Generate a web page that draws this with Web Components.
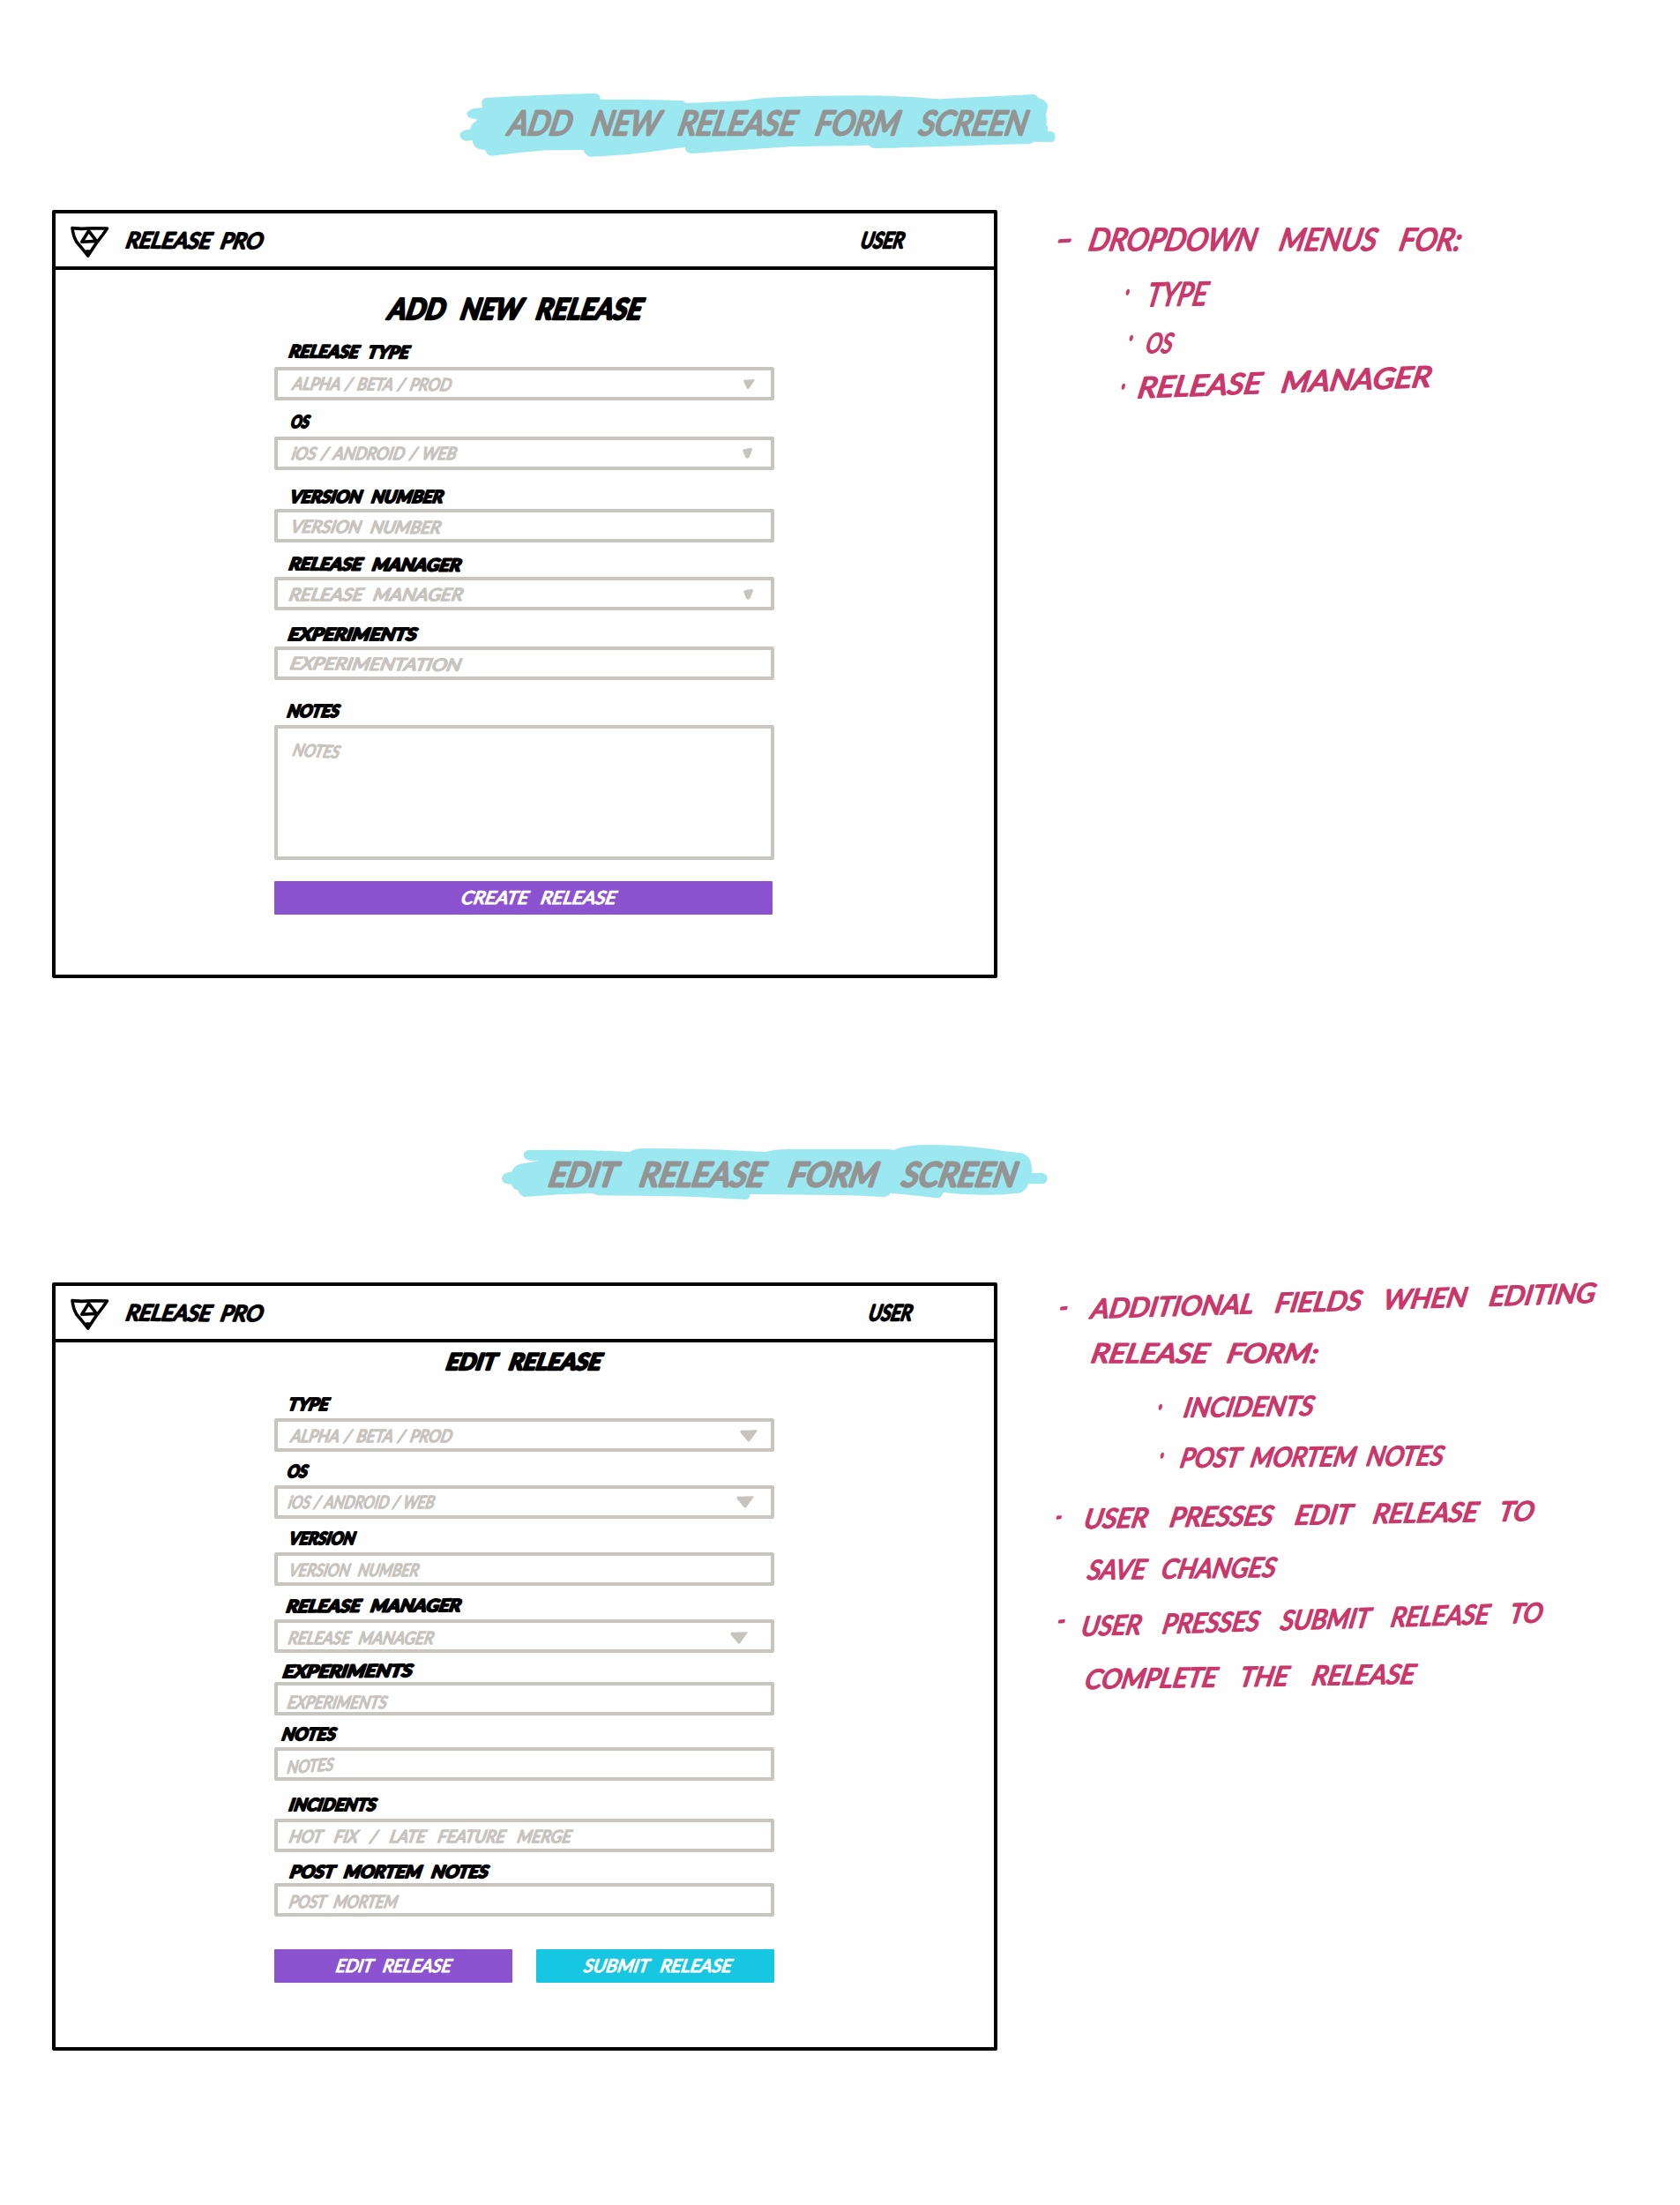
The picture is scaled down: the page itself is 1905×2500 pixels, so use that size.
<!DOCTYPE html>
<html lang="en">
<head>
<meta charset="utf-8">
<title>Release Pro – form screens</title>
<style>
  body { margin: 0; background: #fefefe; font-family: Lato, "Liberation Sans", sans-serif; }
</style>
</head>
<body>
<release-board></release-board>
<script>
const num = (el, name, fallback) => el.hasAttribute(name) ? parseFloat(el.getAttribute(name)) : fallback;

/* One marker-written run. x: left offset, w: ink width, cap: letter height, pen: extra stroke. */
class InkText extends HTMLElement {
  connectedCallback() {
    const text = this.getAttribute('text');
    const w = num(this, 'w', 100), cap = num(this, 'cap', 15), pen = num(this, 'pen', 1);
    const weight = num(this, 'weight', 400), tilt = num(this, 'tilt', 0), rise = num(this, 'rise', 0);
    const gap = num(this, 'gap', 0.25), lean = cap * 0.21;
    const size = (cap - pen) / 0.72;
    const root = this.attachShadow({ mode: 'open' });
    root.innerHTML = `<style>
      :host { display: block; flex: none; width: ${w}px; height: ${cap}px; margin-left: ${num(this, 'x', 0)}px; }
      svg { display: block; overflow: visible; }
      text { font: italic ${weight} ${size}px Lato, "Liberation Sans", sans-serif; fill: currentColor;
        stroke: currentColor; stroke-width: ${pen}px; stroke-linejoin: round; word-spacing: ${gap}em; }
    </style>
    <svg width="${w}" height="${cap}"><text textLength="${Math.max(w - lean, 4)}" lengthAdjust="spacingAndGlyphs"
      transform="translate(0 ${cap - pen / 2 - rise}) rotate(${tilt}) skewX(-12)"></text></svg>`;
    root.querySelector('text').textContent = text;
  }
}

class MarkerTitle extends HTMLElement {
  connectedCallback() {
    const w = num(this, 'w'), h = num(this, 'h');
    this.attachShadow({ mode: 'open' }).innerHTML = `<style>
      :host { display: grid; width: ${w}px; height: ${h}px; margin-left: ${num(this, 'x')}px; color: #949494; }
      svg, div { grid-area: 1 / 1; }
      div { padding-top: ${num(this, 'top')}px; }
    </style>
    <svg width="${w}" height="${h}" viewBox="0 0 1568 ${h * 3}" preserveAspectRatio="none">
      <path fill="#9be8f0" d="${this.getAttribute('shape')}"/></svg>
    <div><slot></slot></div>`;
  }
}

class BrandLogo extends HTMLElement {
  connectedCallback() {
    this.attachShadow({ mode: 'open' }).innerHTML = `<style>:host { display: block; } svg { display: block; }</style>
    <svg width="44" height="37" viewBox="0 0 44 37" fill="none" stroke="#000" stroke-width="3.6" stroke-linecap="round" stroke-linejoin="round">
      <path d="M2 2.6L12 3.4L26 2.8L41.5 3L37 9.5L29 20L23 29L19.7 34L13 25.5L7 18.5Q3 12 2 2.6Z"/>
      <path d="M20.6 5.8L12.8 18.2L29.5 17.4Z"/><path d="M18 29L21 29L20 33Z"/>
    </svg>`;
  }
}

class AppFrame extends HTMLElement {
  connectedCallback() {
    this.attachShadow({ mode: 'open' }).innerHTML = `<style>
      :host { display: block; box-sizing: border-box; flex: none; width: 1072px; height: 871px; border: 4px solid #000; border-radius: 2px; color: #000; }
      header { display: flex; align-items: center; box-sizing: border-box; height: 64px; border-bottom: 4px solid #000; padding: 0 ${num(this, 'inset')}px 0 17px; }
      brand-logo { margin-top: 4px; }
      .user { margin-left: auto; }
    </style>
    <header><brand-logo></brand-logo><ink-text text="RELEASE PRO" x="18" w="159" cap="20" pen="2.2" gap="0.2" tilt="0.4"></ink-text>
    <div class="user"><ink-text text="USER" w="${num(this, 'user')}" cap="20" pen="2.4"></ink-text></div></header>
    <slot></slot>`;
  }
}

class ReleaseForm extends HTMLElement {
  connectedCallback() {
    this.attachShadow({ mode: 'open' }).innerHTML = `<style>
      :host { display: flex; flex-direction: column; width: 567px; margin-left: 248px; }
      .head { padding-top: ${num(this, 'top')}px; }
      .actions { display: flex; gap: 27px; margin-top: ${num(this, 'foot')}px; }
    </style>
    <div class="head"><slot name="title"></slot></div><slot></slot>
    <div class="actions"><slot name="action"></slot></div>`;
  }
}

class FormField extends HTMLElement {
  connectedCallback() {
    const a = n => this.getAttribute(n);
    const arrow = a('arrow');
    const [aw, ah, right] = arrow ? arrow.split(' ').map(Number) : [0, 0, 0];
    const pointer = aw > 15
      ? 'M1 .8Q0 2 .7 3.6L9 13.3Q10 14 11 13.2L19.5 1.5Q20 .3 19 .3L6 .8Q2 0 1 .8Z'
      : aw > 12 ? 'M.5 .8L12 0Q13 .5 12.4 1.6L6.3 10.5Q5 11.5 4 10.6L0 2Z'
      : 'M0 2.5Q2 .3 10 0Q11.5 1 10.5 3L7.6 10.5Q5 13 3 10Z';
    this.attachShadow({ mode: 'open' }).innerHTML = `<style>
      :host { display: block; }
      .label { display: flex; align-items: flex-end; box-sizing: border-box; height: ${a('space')}px; padding-bottom: ${a('drop')}px; }
      .box { display: flex; align-items: ${a('tall') ? 'flex-start' : 'center'}; justify-content: space-between; box-sizing: border-box;
        height: ${a('tall') || 38}px; border: 4px solid #c8c4bf; border-radius: 2px; color: #c7c3be; padding: ${a('tall') ? '16px' : (a('nudge') || 0) + 'px'} ${right}px 0 0; }
      svg { display: block; flex: none; }
    </style>
    <div class="label"><ink-text text="${a('label')}" x="${a('lx')}" w="${a('lw')}" cap="16" weight="700" pen="2" gap="0.32" tilt="${a('lt') || 0}"></ink-text></div>
    <div class="box"><ink-text text="${a('hint')}" x="${a('hx') - 4}" w="${a('hw')}" cap="15.5" pen="1.5" gap="${a('gap') || 0.3}" tilt="${a('ht') || 0}"></ink-text>
    ${arrow ? `<svg width="${aw}" height="${ah}" viewBox="0 0 ${aw > 15 ? 20 : aw > 12 ? 13 : 11} ${aw > 15 ? 14 : aw > 12 ? 11 : 12}" preserveAspectRatio="none"><path fill="currentColor" d="${pointer}"/></svg>` : ''}</div>`;
  }
}

class FormAction extends HTMLElement {
  connectedCallback() {
    this.attachShadow({ mode: 'open' }).innerHTML = `<style>
      :host { display: flex; align-items: center; box-sizing: border-box; height: 38px; width: ${num(this, 'w')}px;
        background: ${this.getAttribute('fill')}; color: #fff; border-radius: 1px; }
    </style><slot></slot>`;
  }
}

/* A note row; drop is the distance from the previous baseline. */
class NoteLine extends HTMLElement {
  connectedCallback() {
    const mark = this.getAttribute('mark');
    const [mx, mw, rise] = (this.getAttribute('at') || '0 0 0').split(' ').map(Number);
    const x = num(this, 'x'), dash = mark === '-';
    this.attachShadow({ mode: 'open' }).innerHTML = `<style>
      :host { display: flex; align-items: flex-end; height: ${num(this, 'drop')}px; color: #c9386b; }
    </style>
    ${mark ? `<ink-text text="${mark}" x="${mx}" w="${mw}" cap="24" pen="${dash ? 1.8 : 2.8}" rise="${rise}" tilt="${dash ? -4 : 0}"></ink-text>` : ''}
    <ink-text text="${this.getAttribute('text')}" x="${x - mx - mw}" w="${num(this, 'w')}" cap="${num(this, 'cap', 23.5)}" pen="1.7" gap="${num(this, 'gap', 0.38)}" tilt="${num(this, 'tilt', 0)}"></ink-text>`;
  }
}

class NoteList extends HTMLElement {
  connectedCallback() {
    this.attachShadow({ mode: 'open' }).innerHTML = `<style>:host { display: flex; flex-direction: column; margin-left: 59px; width: 660px; }</style><slot></slot>`;
  }
}

class ScreenRow extends HTMLElement {
  connectedCallback() {
    this.attachShadow({ mode: 'open' }).innerHTML = `<style>:host { display: flex; align-items: flex-start; padding-left: 59px; margin-top: ${num(this, 'top')}px; }</style><slot></slot>`;
  }
}

class ReleaseBoard extends HTMLElement {
  connectedCallback() {
    this.attachShadow({ mode: 'open' }).innerHTML = `<style>
      :host { display: block; box-sizing: border-box; width: 1905px; height: 2500px; padding-top: 80px; overflow: hidden; }
      .second { margin-top: 171px; }
    </style>
    <section>
      <marker-title x="500" w="720" h="120" top="44" shape="M110 93Q240 82 380 78Q395 80 393 98Q500 98 595 102Q604 106 604 111Q680 106 752 102Q800 86 1040 85Q1150 86 1230 97L1463 81Q1474 84 1474 92Q1496 100 1499 120L1494 150Q1497 170 1495 185Q1502 195 1497 206Q1516 205 1517 222Q1517 243 1508 243L1462 242Q1460 249 1450 249L1120 263L1072 264Q1060 262 1058 254L860 259Q740 270 620 282Q603 282 603 262L585 263Q470 288 370 293Q356 291 352 270L260 271Q190 279 125 290Q113 288 110 270Q80 270 78 238L60 239Q46 234 47 218Q49 201 72 200Q73 182 89 170L88 165Q64 164 64 146Q67 128 103 126Q96 100 110 93Z">
        <ink-text text="ADD NEW RELEASE FORM SCREEN" x="75" w="594" cap="30" pen="2.6" gap="0.42"></ink-text>
      </marker-title>
      <screen-row top="38">
        <app-frame inset="99" user="53">
          <release-form top="31" foot="24">
            <ink-text slot="title" text="ADD NEW RELEASE" x="128" w="293" cap="26" pen="2.4" weight="700" gap="0.35"></ink-text>
            <form-field space="53" drop="10" label="RELEASE TYPE" lx="16" lw="139" lt="0.6" hint="ALPHA / BETA / PROD" hx="20" hw="183" ht="0.4" gap="0.1" arrow="13 11 18"></form-field>
            <form-field space="41" drop="9" label="OS" lx="18" lw="24" hint="iOS / ANDROID / WEB" hx="19" hw="190" gap="0.1" arrow="11 12 21"></form-field>
            <form-field space="44" drop="6" label="VERSION NUMBER" lx="17" lw="177" hint="VERSION NUMBER" hx="18" hw="173" nudge="2" ht="0.4"></form-field>
            <form-field space="39" drop="7" label="RELEASE MANAGER" lx="16" lw="198" lt="0.5" hint="RELEASE MANAGER" hx="16" hw="200" nudge="1" arrow="11 12 20"></form-field>
            <form-field space="41" drop="6" label="EXPERIMENTS" lx="15" lw="149" hint="EXPERIMENTATION" hx="17" hw="197" nudge="0" ht="0.6"></form-field>
            <form-field space="51" drop="8" label="NOTES" lx="14" lw="62" hint="NOTES" hx="20" hw="56" tall="153" ht="3"></form-field>
            <form-action slot="action" w="565" fill="#8b53cf"><ink-text text="CREATE RELEASE" x="211" w="179" cap="16" pen="1.2" gap="0.4"></ink-text></form-action>
          </release-form>
        </app-frame>
        <note-list>
          <note-line drop="47" mark="-" at="7 23 1" x="43" w="428" cap="27" text="DROPDOWN MENUS FOR:" gap="0.55"></note-line>
          <note-line drop="63" mark="·" at="85 9 7" x="109" w="74" cap="28" text="TYPE" tilt="-1"></note-line>
          <note-line drop="53" mark="·" at="89 9 8" x="108" w="35" cap="24" text="OS"></note-line>
          <note-line drop="51" mark="·" at="80 9 4" x="99" w="338" cap="25" text="RELEASE MANAGER" tilt="-2.2"></note-line>
        </note-list>
      </screen-row>
    </section>
    <section class="second">
      <marker-title x="550" w="660" h="100" top="36" shape="M118 72Q260 70 390 78Q402 66 430 66Q600 66 755 78Q780 69 815 69L1085 69Q1100 71 1102 72Q1130 54 1200 54Q1320 56 1400 76L1445 82Q1470 92 1471 120Q1475 137 1473 151L1500 149Q1515 153 1515 168Q1513 187 1500 187L1463 187Q1460 208 1440 218Q1330 232 1234 216Q1230 235 1218 235Q1150 225 1092 218Q1088 231 1070 231Q980 224 900 224L714 222Q713 240 702 240Q560 228 460 228L305 226Q294 223 292 219Q200 221 105 231Q90 222 89 208Q74 205 72 188Q46 189 45 168Q46 148 72 146Q77 125 95 119L145 108L120 107Q104 104 104 88Q106 73 118 72Z">
        <ink-text text="EDIT RELEASE FORM SCREEN" x="71" w="536" cap="30" pen="3" gap="0.52"></ink-text>
      </marker-title>
      <screen-row top="74">
        <app-frame inset="90" user="53">
          <release-form top="11" foot="37">
            <ink-text slot="title" text="EDIT RELEASE" x="194" w="180" cap="21" pen="2.4" weight="700" gap="0.35"></ink-text>
            <form-field space="54" drop="8" label="TYPE" lx="15" lw="49" hint="ALPHA / BETA / PROD" hx="18" hw="186" nudge="2" gap="0.1" arrow="20 14 15"></form-field>
            <form-field space="38" drop="8" label="OS" lx="14" lw="26" hint="iOS / ANDROID / WEB" hx="15" hw="169" nudge="0" gap="0.05" arrow="20 14 19"></form-field>
            <form-field space="38" drop="8" label="VERSION" lx="16" lw="78" hint="VERSION NUMBER" hx="16" hw="150" nudge="2"></form-field>
            <form-field space="38" drop="7" label="RELEASE MANAGER" lx="13" lw="201" lt="-0.3" hint="RELEASE MANAGER" hx="15" hw="168" nudge="3" arrow="20 14 26"></form-field>
            <form-field space="33" drop="4" label="EXPERIMENTS" lx="9" lw="150" lt="-0.4" hint="EXPERIMENTS" hx="14" hw="116" nudge="7"></form-field>
            <form-field space="36" drop="7" label="NOTES" lx="8" lw="64" hint="NOTES" hx="14" hw="56" nudge="7" ht="-4"></form-field>
            <form-field space="43" drop="8" label="INCIDENTS" lx="16" lw="102" hint="HOT FIX / LATE FEATURE MERGE" hx="16" hw="323" nudge="1" gap="0.5"></form-field>
            <form-field space="35" drop="5" label="POST MORTEM NOTES" lx="17" lw="228" hint="POST MORTEM" hx="16" hw="126" nudge="3"></form-field>
            <form-action slot="action" w="270" fill="#8b53cf"><ink-text text="EDIT RELEASE" x="69" w="134" cap="16" pen="1.2" gap="0.35"></ink-text></form-action>
            <form-action slot="action" w="270" fill="#17c6e1"><ink-text text="SUBMIT RELEASE" x="53" w="171" cap="16" pen="1.2" gap="0.4"></ink-text></form-action>
          </release-form>
        </app-frame>
        <note-list>
          <note-line drop="41" mark="-" at="10 15 1" x="46" w="577" text="ADDITIONAL FIELDS WHEN EDITING" tilt="-1.8" gap="0.55"></note-line>
          <note-line drop="50" x="46" w="262" text="RELEASE FORM:"></note-line>
          <note-line drop="62" mark="·" at="122 9 2" x="151" w="152" text="INCIDENTS" tilt="-0.8"></note-line>
          <note-line drop="57" mark="·" at="124 9 4" x="147" w="303" text="POST MORTEM NOTES" tilt="-0.5" gap="0.2"></note-line>
          <note-line drop="69" mark="-" at="6 12 2" x="38" w="515" text="USER PRESSES EDIT RELEASE TO" tilt="-1" gap="0.58"></note-line>
          <note-line drop="58" x="42" w="218" text="SAVE CHANGES" tilt="-0.8"></note-line>
          <note-line drop="64" mark="-" at="8 14 6" x="35" w="528" text="USER PRESSES SUBMIT RELEASE TO" tilt="-1.7" gap="0.6"></note-line>
          <note-line drop="60" x="39" w="379" text="COMPLETE THE RELEASE" tilt="-0.9" gap="0.65"></note-line>
        </note-list>
      </screen-row>
    </section>`;
  }
}

for (const [tag, cls] of Object.entries({
  'ink-text': InkText, 'marker-title': MarkerTitle, 'brand-logo': BrandLogo, 'app-frame': AppFrame,
  'release-form': ReleaseForm, 'form-field': FormField, 'form-action': FormAction,
  'note-line': NoteLine, 'note-list': NoteList, 'screen-row': ScreenRow, 'release-board': ReleaseBoard
})) customElements.define(tag, cls);
</script>
</body>
</html>
